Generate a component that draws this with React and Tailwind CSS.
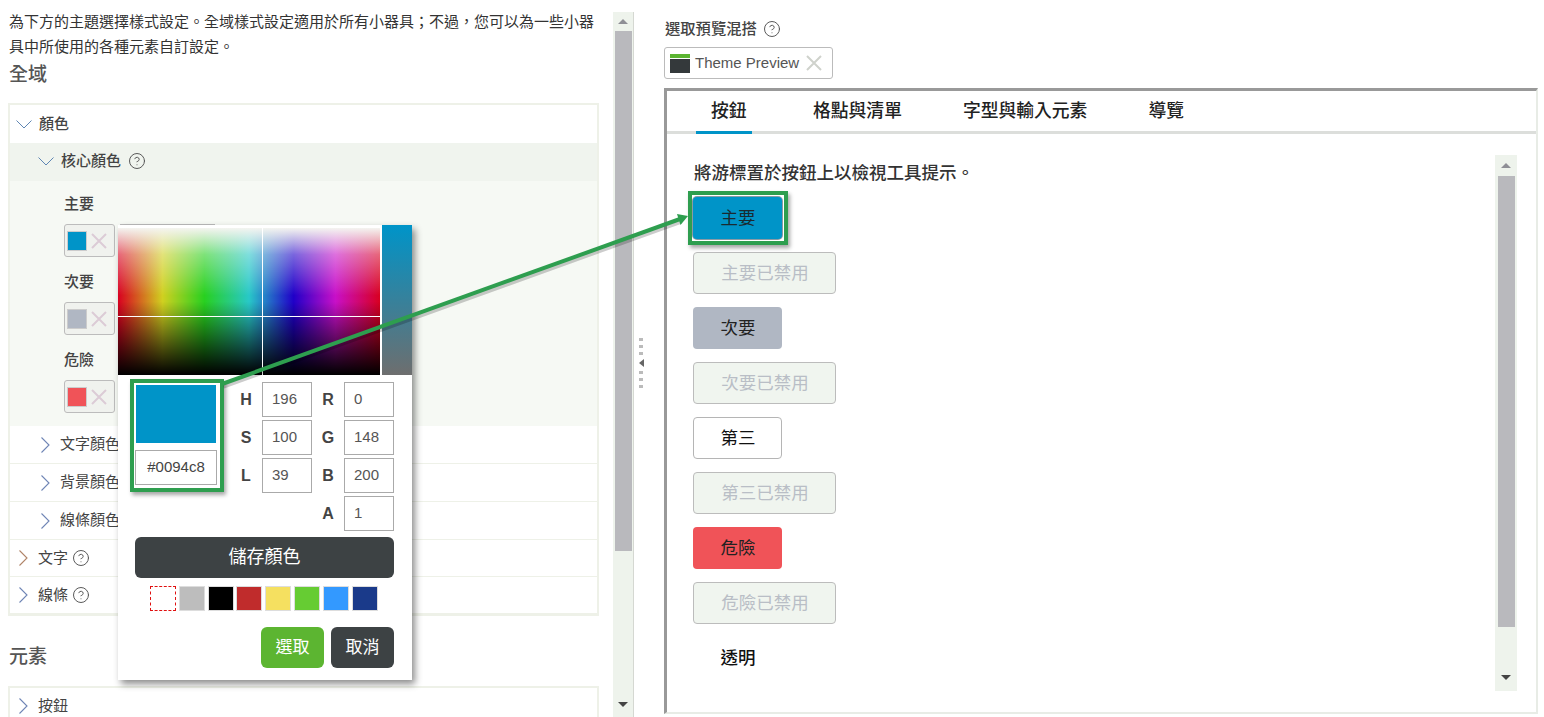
import React from 'react';
import { CircleHelp } from 'lucide-react';

const swatchColors = ['#bdbdbd', '#000000', '#c02c2c', '#f5e060', '#66cc33', '#3399ff', '#1a3a8a'];

const previewButtons = [
    { label: '主要', className: 'w-[89px] bg-[#0094c8] ring-1 ring-[#8a9aa5] text-[#1a2a30]' },
    { label: '主要已禁用', disabled: true },
    { label: '次要', className: 'w-[89px] bg-[#b0b7c3] text-[#222]' },
    { label: '次要已禁用', disabled: true },
    { label: '第三', className: 'w-[89px] bg-white border border-[#b5b5b5] text-[#111]' },
    { label: '第三已禁用', disabled: true },
    { label: '危險', className: 'w-[89px] bg-[#f05358] text-[#222]' },
    { label: '危險已禁用', disabled: true },
    { label: '透明', className: 'w-[89px] text-[#111] font-medium' },
];

function ChevronDownThin({ color = '#5f86b3' }) {
    return (
        <svg width="16" height="9" viewBox="0 0 16 9" fill="none" stroke={color} strokeWidth="1" className="shrink-0">
            <path d="M0.5 0.5 L8 8 L15.5 0.5" />
        </svg>
    );
}

function ChevronRightThin({ color = '#6f85b5' }) {
    return (
        <svg width="9" height="16" viewBox="0 0 9 16" fill="none" stroke={color} strokeWidth="1.1" className="shrink-0">
            <path d="M0.5 0.5 L8 8 L0.5 15.5" />
        </svg>
    );
}

function ThinX({ color }) {
    return (
        <svg width="16" height="16" viewBox="0 0 16 16" fill="none" stroke={color} strokeWidth="2" className="shrink-0">
            <path d="M1 1 L15 15 M15 1 L1 15" />
        </svg>
    );
}

function Help() {
    return <CircleHelp size={18} strokeWidth={1.3} className="text-[#555] shrink-0" />;
}

function SwatchField({ label, color }) {
    return (
        <div className="h-[78px]">
            <div className="h-[21px] text-[15px] leading-[21px] font-medium text-[#444]">{label}</div>
            <div className="flex mt-[10px]">
                <div className="w-[51px] h-[33px] flex items-center pl-[2px] gap-[4px] bg-[#f0f2ee] border border-[#bcbcbc] rounded-[3px]">
                    <div className={`w-[20px] h-[20px] border border-[#ccc] ${color}`} />
                    <ThinX color="#dccbd6" />
                </div>
                <div className="w-[95px] h-[33px] ml-[5px] bg-white border border-[#bbb]" />
            </div>
        </div>
    );
}

function SubRow({ label }) {
    return (
        <div className="h-[38px] flex items-center pl-[31px] gap-[10px] bg-white border-b border-[#eef1e8] text-[15px] text-[#444]">
            <ChevronRightThin />
            <span>{label}</span>
        </div>
    );
}

function TopRow({ label, color, help }) {
    return (
        <div className="h-[37px] flex items-center pl-[9px] gap-[10px] bg-white border-b border-[#eef1e8] text-[15px] text-[#444]">
            <ChevronRightThin color={color} />
            <span>{label}</span>
            {help && <span className="-ml-[6px]"><Help /></span>}
        </div>
    );
}

function Scrollbar({ className, thumb, gap, after }) {
    return (
        <div className={`flex flex-col items-center bg-[#eef3ec] ${className}`}>
            <div className={`shrink-0 flex items-center justify-center w-full ${gap}`}>
                <div className="w-0 h-0 border-x-[5px] border-x-transparent border-b-[5px] border-b-[#8f8f96]" />
            </div>
            <div className={`shrink-0 w-[17px] bg-[#b9b9bd] ${thumb}`} />
            <div className={`flex-1 flex items-end justify-center w-full ${after}`}>
                <div className="w-0 h-0 border-x-[5px] border-x-transparent border-t-[5px] border-t-[#444]" />
            </div>
        </div>
    );
}

function NumField({ label, value }) {
    return (
        <div className="flex items-center h-[35px]">
            <span className="w-[18px] text-center text-[16px] font-bold text-[#444]">{label}</span>
            <div className="ml-[7px] w-[50px] h-[35px] flex items-center pl-[9px] border border-[#aaa] text-[15px] text-[#555]">{value}</div>
        </div>
    );
}

function ColorPopover() {
    return (
        <div className="absolute left-[118px] top-[225px] w-[294px] h-[455px] bg-white shadow-[3px_4px_7px_rgba(0,0,0,0.45)]">
            <div className="flex h-[150px]">
                <div className="relative mt-[3px] w-[262px] h-[147px] bg-[linear-gradient(to_bottom,#f4f4f0_0%,rgba(255,255,255,0.4)_18%,rgba(255,255,255,0)_46%,rgba(0,0,0,0)_50%,#000000_100%),linear-gradient(to_right,#d80020_0%,#d0d020_17%,#28d020_33%,#28c8c8_50%,#2000c8_67%,#c810c8_83%,#d80020_100%)]">
                    <div className="absolute left-[144px] top-0 bottom-0 w-px bg-white" />
                    <div className="absolute left-0 right-0 top-[88px] h-px bg-white" />
                </div>
                <div className="ml-[2px] w-[30px] h-[150px] bg-[linear-gradient(to_bottom,#0094c8,#6e6e6e)] border-t border-[#0094c8]" />
            </div>

            <div className="flex mt-[7px] pl-[17px]">
                <div className="w-[82px]">
                    <div className="w-[80px] h-[58px] ml-px mt-[3px] bg-[#0094c8]" />
                    <div className="w-[82px] h-[35px] mt-[7px] flex items-center justify-center border border-[#aaa] text-[15px] text-[#444]">#0094c8</div>
                </div>
                <div className="ml-[20px] flex flex-col gap-[3px]">
                    <NumField label="H" value="196" />
                    <NumField label="S" value="100" />
                    <NumField label="L" value="39" />
                </div>
                <div className="ml-[7px] flex flex-col gap-[3px]">
                    <NumField label="R" value="0" />
                    <NumField label="G" value="148" />
                    <NumField label="B" value="200" />
                    <NumField label="A" value="1" />
                </div>
            </div>

            <div className="mx-[17px] w-[259px] h-[41px] mt-[6px] flex items-center justify-center rounded-[6px] bg-[#3d4244] text-white text-[18px]">儲存顏色</div>

            <div className="flex mt-[8px] ml-[32px] gap-[2.8px]">
                <div className="w-[26px] h-[25px] border border-dashed border-[#e01010]" />
                {swatchColors.map(color => (
                    <div key={color} className="w-[26px] h-[25px] border border-[#ddd]" style={{ backgroundColor: color }} />
                ))}
            </div>

            <div className="flex justify-end gap-[7px] mt-[16px] pr-[18px]">
                <div className="w-[63px] h-[41px] flex items-center justify-center rounded-[6px] bg-[#5cb531] text-white text-[17px]">選取</div>
                <div className="w-[63px] h-[41px] flex items-center justify-center rounded-[6px] bg-[#3d4244] text-white text-[17px]">取消</div>
            </div>
        </div>
    );
}

function Annotations() {
    return (
        <>
            <div className="absolute left-[130px] top-[379px] w-[94px] h-[113px] border-[4px] border-[#2e9e4f] shadow-[2px_3px_4px_rgba(0,0,0,0.35)]" />
            <div className="absolute left-[688px] top-[191px] w-[100px] h-[54px] border-[4px] border-[#2e9e4f] shadow-[2px_3px_4px_rgba(0,0,0,0.35)]" />
            <svg className="absolute left-0 top-0 pointer-events-none" width="1544" height="717" viewBox="0 0 1544 717" fill="none">
                <path d="M222 384 L680 219" stroke="#00000033" strokeWidth="4" transform="translate(1.5 2.5)" />
                <path d="M222 384 L680 219" stroke="#2e9e4f" strokeWidth="4" />
                <path d="M688 216 L677 214 L680.5 225 Z" fill="#2e9e4f" />
            </svg>
        </>
    );
}

export default function App() {
    return (
        <div className="relative flex w-[1544px] h-[717px] overflow-hidden bg-white font-['Liberation_Sans','Noto_Sans_CJK_TC',sans-serif]">
            {/* panel kiri */}
            <div className="w-[613px] shrink-0 pl-[9px] pr-[14px] pt-[9px]">
                <p className="text-[15px] leading-[25px] text-[#333] w-[590px]">為下方的主題選擇樣式設定。全域樣式設定適用於所有小器具；不過，您可以為一些小器具中所使用的各種元素自訂設定。</p>
                <h2 className="mt-[1px] h-[30px] text-[19px] leading-[30px] font-medium text-[#555]">全域</h2>
                <div className="mt-[13px] -ml-px w-[591px] border-2 border-[#eef1e8]">
                    <div className="h-[38px] flex items-center pl-[6px] gap-[7px] text-[15px] font-medium text-[#444]">
                        <ChevronDownThin />
                        <span>顏色</span>
                    </div>
                    <div className="h-[38px] pb-[2px] flex items-center pl-[28px] gap-[7px] bg-[#f0f4ee] text-[15px] font-medium text-[#444]">
                        <ChevronDownThin />
                        <span>核心顏色</span>
                        <Help />
                    </div>
                    <div className="h-[245px] pl-[54px] pt-[12px] bg-[#f6f9f4]">
                        <SwatchField label="主要" color="bg-[#0094c8]" />
                        <SwatchField label="次要" color="bg-[#b0b7c3]" />
                        <SwatchField label="危險" color="bg-[#f05358]" />
                    </div>
                    <SubRow label="文字顏色" />
                    <SubRow label="背景顏色" />
                    <SubRow label="線條顏色" />
                    <TopRow label="文字" color="#b08468" help />
                    <TopRow label="線條" color="#6f85b5" help />
                </div>
                <h2 className="mt-[26px] h-[30px] text-[19px] leading-[30px] font-medium text-[#555]">元素</h2>
                <div className="mt-[14px] -ml-px w-[591px] border-2 border-[#eef1e8]">
                    <TopRow label="按鈕" color="#6f85b5" />
                </div>
            </div>

            <Scrollbar className="w-[21px] h-[705px] mt-[12px] border-r border-[#d5d8d2]" thumb="h-[520px]" gap="h-[19px]" after="pb-[10px]" />

            {/* splitter */}
            <div className="w-[30px] shrink-0 flex flex-col items-center justify-center pr-[16px] pt-[9px] gap-[4px]">
                <div className="flex flex-col gap-[4px]">
                    {[0, 1, 2].map(i => <div key={i} className="w-[4px] h-[3px] bg-[#bbb]" />)}
                </div>
                <div className="w-0 h-0 border-y-[4px] border-y-transparent border-r-[5px] border-r-[#666]" />
                <div className="flex flex-col gap-[4px]">
                    {[0, 1, 2].map(i => <div key={i} className="w-[4px] h-[3px] bg-[#bbb]" />)}
                </div>
            </div>

            {/* panel kanan */}
            <div className="w-[874px] shrink-0 pt-[19px]">
                <div className="flex items-center gap-[6px] h-[20px] pl-px text-[15.3px] font-medium text-[#444]">
                    <span>選取預覽混搭</span>
                    <Help />
                </div>
                <div className="mt-[8px] w-[169px] h-[32px] flex items-center pl-[5px] border border-[#bbb] rounded-[3px]">
                    <div className="w-[20px] h-[19px] flex flex-col gap-[1px]">
                        <div className="h-[4px] bg-[#5cb531]" />
                        <div className="flex-1 bg-[#34393b]" />
                    </div>
                    <span className="ml-[5px] text-[15px] text-[#555]">Theme Preview</span>
                    <span className="ml-[7px]"><ThinX color="#cfd2cc" /></span>
                </div>
                <div className="mt-[9px] h-[626px] border-t-[3px] border-l-[3px] border-[#999] border-r-2 border-r-[#e8ece6] border-b-2 border-b-[#e8ece6]">
                    <div className="relative h-[43px] flex items-end border-b-[3px] border-[#dcdedb] pl-[29px] text-[17.8px] font-medium text-[#222]">
                        <div className="w-[56px] h-[43px] -mb-[3px] pt-[7px] pl-[15px] whitespace-nowrap border-b-[3px] border-[#0094c8]">按鈕</div>
                        <div className="ml-[61px] h-[40px] pt-[7px]">格點與清單</div>
                        <div className="ml-[61px] h-[40px] pt-[7px]">字型與輸入元素</div>
                        <div className="ml-[61px] h-[40px] pt-[7px]">導覽</div>
                    </div>
                    <div className="flex">
                        <div className="w-[828px] pl-[26px] pt-[26px]">
                            <p className="h-[26px] pl-px text-[17.5px] leading-[26px] font-medium text-[#333]">將游標置於按鈕上以檢視工具提示。</p>
                            <div className="mt-[11px] flex flex-col gap-[13px]">
                                {previewButtons.map(btn => (
                                    <div
                                        key={btn.label}
                                        className={btn.disabled
                                            ? 'w-[143px] h-[42px] pl-px flex items-center justify-center rounded-[4px] bg-[#f0f5ef] border border-[#bcbcbc] text-[17.5px] text-[#b9bec6]'
                                            : `h-[42px] pl-px flex items-center justify-center rounded-[4px] text-[17.5px] ${btn.className}`}
                                    >
                                        {btn.label}
                                    </div>
                                ))}
                            </div>
                        </div>
                        <Scrollbar className="w-[22px] h-[536px] mt-[21px]" thumb="h-[451px]" gap="h-[21px]" after="pb-[11px]" />
                    </div>
                </div>
            </div>

            <ColorPopover />
            <Annotations />
        </div>
    );
}
